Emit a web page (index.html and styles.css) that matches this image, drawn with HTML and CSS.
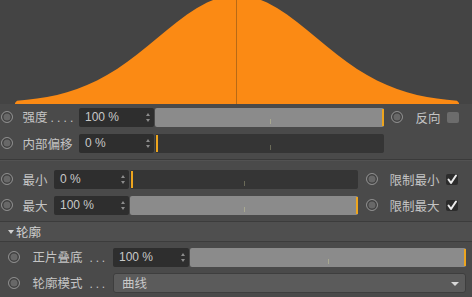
FILE: index.html
```html
<html>

<head>
    <meta charset="utf-8">
    <title>衰减</title>
    <link rel="stylesheet" href="styles.css">
</head>

<body>
    <main class="panel">
        <div class="graph">
            <svg width="472" height="104" viewBox="0 0 472 104">
                <path class="curve"
                    d="M15,104 L15,103 17,100.8 27,99.8 37,98.6 47,97 57,94.9 67,92.3 77,89.1 87,85.1 97,80.5 107,75.1 117,68.9 127,62 137,54.5 147,46.5 157,38.3 167,30 177,22 187,14.6 197,8 207,2.5 217,-1.6 227,-4.1 237,-5 247,-4.1 257,-1.6 267,2.5 277,8 287,14.6 297,22 307,30 317,38.3 327,46.5 337,54.5 347,62 357,68.9 367,75.1 377,80.5 387,85.1 397,89.1 407,92.3 417,94.9 427,97 437,98.6 447,99.8 457,100.8 459,103 459,104 Z" />
                <line class="center-line" x1="236.5" y1="0" x2="236.5" y2="104" />
            </svg>
        </div>

        <section class="group group-wide">
            <div class="row">
                <span class="radio"></span>
                <span class="label">强度<span class="dots">....</span></span>
                <span class="field">100 %<span class="spin"></span></span>
                <span class="slider full"><span class="tick"></span><span class="mark"></span></span>
                <span class="extra">
                    <span class="radio"></span>
                    <span class="extra-label">反向</span>
                    <span class="check"></span>
                </span>
            </div>
            <div class="row">
                <span class="radio"></span>
                <span class="label">内部偏移</span>
                <span class="field">0 %<span class="spin"></span></span>
                <span class="slider"><span class="tick"></span><span class="mark"></span></span>
                <span class="extra"></span>
            </div>
        </section>

        <div class="separator"></div>

        <section class="group group-short">
            <div class="row">
                <span class="radio"></span>
                <span class="label">最小</span>
                <span class="field">0 %<span class="spin"></span></span>
                <span class="slider"><span class="tick"></span><span class="mark"></span></span>
                <span class="extra">
                    <span class="radio"></span>
                    <span class="extra-label">限制最小</span>
                    <span class="check on">
                        <svg width="12" height="11" viewBox="0 0 12 11">
                            <path d="M2.5,5.5 L5,9 L10,1.5" />
                        </svg>
                    </span>
                </span>
            </div>
            <div class="row">
                <span class="radio"></span>
                <span class="label">最大</span>
                <span class="field">100 %<span class="spin"></span></span>
                <span class="slider full"><span class="tick"></span><span class="mark"></span></span>
                <span class="extra">
                    <span class="radio"></span>
                    <span class="extra-label">限制最大</span>
                    <span class="check on">
                        <svg width="12" height="11" viewBox="0 0 12 11">
                            <path d="M2.5,5.5 L5,9 L10,1.5" />
                        </svg>
                    </span>
                </span>
            </div>
        </section>

        <div class="group-header">
            <span class="arrow"></span>
            <span>轮廓</span>
        </div>

        <section class="group group-sub">
            <div class="row">
                <span class="radio"></span>
                <span class="label">正片叠底<span class="dots wide">...</span></span>
                <span class="field">100 %<span class="spin"></span></span>
                <span class="slider full"><span class="tick"></span><span class="mark"></span></span>
            </div>
            <div class="row">
                <span class="radio"></span>
                <span class="label">轮廓模式<span class="dots wide">...</span></span>
                <span class="dropdown">曲线<span class="drop-arrow"></span></span>
            </div>
        </section>
    </main>
</body>

</html>
```

FILE: styles.css
```css
html,
body {
    margin: 0px;
    padding: 0px;
    background: #4a4a4a;
}

.panel {
    width: 472px;
    height: 297px;
    overflow: hidden;
    font-family: "Noto Sans CJK SC", "Liberation Sans", sans-serif;
    font-size: 12.5px;
    color: #c4c4c4;
    background: #4a4a4a;
}

.graph {
    height: 104px;
    background: #444444;
}

.graph svg {
    display: block;
}

.curve {
    fill: #fb8a14;
}

.center-line {
    stroke: #b86a16;
    stroke-width: 1;
}

.row {
    display: flex;
    align-items: center;
    height: 26px;
}

.radio {
    flex: none;
    box-sizing: border-box;
    width: 12px;
    height: 12px;
    margin-left: 1px;
    margin-right: 9.5px;
    border-radius: 50%;
    border: 1.5px solid #8e8e8e;
    background: #686868;
    box-shadow: inset 0 0 0 1.5px #414141;
}

.label {
    flex: none;
    white-space: nowrap;
    line-height: 19px;
}

.dots {
    margin-left: 3px;
    letter-spacing: 3.2px;
    font-family: "Liberation Sans", sans-serif;
    font-size: 12px;
}

.dots.wide {
    margin-left: 7px;
    letter-spacing: 2.8px;
}

.group-wide .label {
    width: 56.5px;
}

.group-short .label {
    width: 31.5px;
}

.group-sub .radio {
    margin-left: 8px;
    margin-right: 12.5px;
}

.group-sub .label {
    width: 80.5px;
}

.field {
    flex: none;
    position: relative;
    box-sizing: border-box;
    width: 75px;
    height: 19px;
    padding-left: 6px;
    border-radius: 2px;
    background: #2e2e2e;
    font-family: "Liberation Sans", sans-serif;
    font-size: 12px;
    line-height: 19px;
    color: #c8c8c8;
}

.group-sub .field {
    width: 76px;
}

.spin {
    position: absolute;
    right: 3px;
    top: 5px;
    width: 5px;
    height: 9px;
}

.spin::before,
.spin::after {
    content: "";
    position: absolute;
    left: 0px;
    border-left: 2.5px solid transparent;
    border-right: 2.5px solid transparent;
}

.spin::before {
    top: 0px;
    border-bottom: 3px solid #8c8c8c;
}

.spin::after {
    bottom: 0px;
    border-top: 3px solid #8c8c8c;
}

.slider {
    position: relative;
    flex: 1;
    height: 19px;
    margin-left: 1px;
    border-radius: 2px;
    background: #353535;
}

.slider.full {
    background: #8b8b8b;
}

.tick {
    position: absolute;
    left: 50%;
    bottom: 3px;
    width: 1px;
    height: 5px;
    background: #6a6a58;
}

.slider.full .tick {
    background: #a8a890;
}

.mark {
    position: absolute;
    left: 1px;
    top: 1px;
    bottom: 1px;
    width: 2px;
    background: #eda51e;
}

.slider.full .mark {
    left: auto;
    right: 0px;
}

.extra {
    flex: none;
    display: flex;
    align-items: center;
}

.group-wide .extra {
    width: 88px;
}

.group-wide .extra .radio {
    margin-left: 6.5px;
    margin-right: 13px;
}

.group-wide .extra-label {
    width: 31px;
}

.group-short .extra {
    width: 114px;
}

.group-short .extra .radio {
    margin-left: 8px;
    margin-right: 11.5px;
}

.group-short .extra-label {
    width: 56px;
    white-space: nowrap;
}

.check {
    flex: none;
    width: 12px;
    height: 11px;
    border-radius: 2px;
    background: #6c6c6c;
}

.check.on {
    background: #2c2c2c;
}

.check svg {
    display: block;
}

.check path {
    fill: none;
    stroke: #ececec;
    stroke-width: 2;
    stroke-linecap: round;
    stroke-linejoin: round;
}

.separator {
    height: 1px;
    margin-top: 3px;
    margin-bottom: 5px;
    background: #3a3a3a;
    border-bottom: 1px solid #525252;
}

.group-header {
    display: flex;
    align-items: center;
    height: 19px;
    margin-top: 3px;
    padding-left: 8px;
    border-top: 1px solid #3c3c3c;
    border-bottom: 1px solid #3c3c3c;
    background: #4f4f4f;
    color: #d0d0d0;
}

.arrow {
    width: 0px;
    height: 0px;
    margin-right: 2px;
    border-left: 3.5px solid transparent;
    border-right: 3.5px solid transparent;
    border-top: 4px solid #d0d0d0;
}

.group-sub {
    padding-top: 2px;
    padding-right: 6px;
}

.group-sub .slider {
    margin-left: 1px;
}

.dropdown {
    position: relative;
    flex: 1;
    box-sizing: border-box;
    height: 20px;
    padding-left: 8px;
    border-radius: 3px;
    border: 1px solid #3e3e3e;
    background: #5b5b5b;
    line-height: 18px;
    color: #c8c8c8;
}

.drop-arrow {
    position: absolute;
    right: 6px;
    top: 8px;
    width: 0px;
    height: 0px;
    border-left: 4px solid transparent;
    border-right: 4px solid transparent;
    border-top: 4px solid #d8d8d8;
}
```
